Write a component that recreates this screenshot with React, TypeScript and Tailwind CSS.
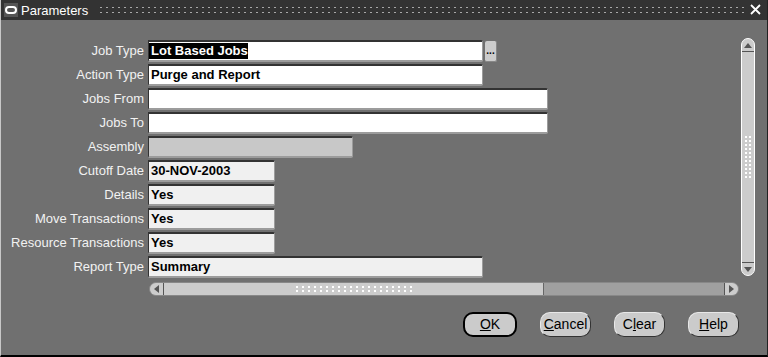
import React from "react";

type Row = {
  label: string;
  value: string;
  width: string;
  tone: "white" | "light" | "gray";
  selected?: boolean;
  lov?: boolean;
};

const rows: Row[] = [
  { label: "Job Type", value: "Lot Based Jobs", width: "w-[335px]", tone: "white", selected: true, lov: true },
  { label: "Action Type", value: "Purge and Report", width: "w-[335px]", tone: "white" },
  { label: "Jobs From", value: "", width: "w-[400px]", tone: "white" },
  { label: "Jobs To", value: "", width: "w-[400px]", tone: "white" },
  { label: "Assembly", value: "", width: "w-[205px]", tone: "gray" },
  { label: "Cutoff Date", value: "30-NOV-2003", width: "w-[127px]", tone: "light" },
  { label: "Details", value: "Yes", width: "w-[127px]", tone: "light" },
  { label: "Move Transactions", value: "Yes", width: "w-[127px]", tone: "light" },
  { label: "Resource Transactions", value: "Yes", width: "w-[127px]", tone: "light" },
  { label: "Report Type", value: "Summary", width: "w-[335px]", tone: "light" },
];

function Field({ row }: { row: Row }) {
  const bg =
    row.tone === "white" ? "bg-white" : row.tone === "light" ? "bg-[#f0f0f0]" : "bg-[#c8c8c8]";
  return (
    <div
      className={`${row.width} ${bg} h-[22px] flex items-center border-t-2 border-l border-t-[#333] border-l-[#333] border-r border-b-2 border-r-[#9c9c9c] border-b-[#9c9c9c] rounded-tr-[2px] rounded-br-[2px]`}
    >
      {row.value && (
        <span
          className={`pl-[2px] text-[13px] font-bold leading-[16px] ${
            row.selected ? "bg-black text-white" : "text-black"
          }`}
        >
          {row.value}
        </span>
      )}
    </div>
  );
}

function Btn({ pre, u, post, def }: { pre: string; u: string; post: string; def?: boolean }) {
  return (
    <div
      className={`h-[25px] flex items-center justify-center bg-[#cbcbcb] rounded-[10px] text-[14px] text-black ${
        def ? "w-[54px] border-2 border-black" : "w-[51px] border border-[#e8e8e8] border-r-[#333] border-b-[#333]"
      }`}
    >
      <span>
        {pre}
        <span className="underline">{u}</span>
        {post}
      </span>
    </div>
  );
}

export default function App() {
  return (
    <div
      className="w-[768px] h-[357px] bg-[#707070] flex flex-col overflow-hidden border-l border-l-[#c8c8c8] border-b-2 border-b-black border-r border-r-[#222]"
      style={{ fontFamily: '"Liberation Sans", Arial, sans-serif' }}
    >
      {/* title bar */}
      <div className="h-[20px] bg-[#333] flex items-center shrink-0">
        <div className="ml-[3px] w-[14px] h-[14px] bg-[#555] flex items-center justify-center">
          <div className="w-[12px] h-[8px] rounded-full border-2 border-white" />
        </div>
        <span className="ml-[3px] text-white text-[13px] leading-none">Parameters</span>
        <div className="ml-[10px] flex-1 h-[10px] bg-[radial-gradient(circle,#a8a8a8_0.9px,transparent_1.1px)] bg-[length:6px_5px]" />
        <svg width="16" height="14" viewBox="0 0 16 14" className="mx-[3px]">
          <path d="M3 2 L12 11 M12 2 L3 11" stroke="white" strokeWidth="1.8" />
        </svg>
      </div>

      {/* content */}
      <div className="flex pt-[18px]">
        <div className="flex flex-col gap-[2px] pt-[2px]">
          {rows.map((r) => (
            <div key={r.label} className="flex items-center h-[22px]">
              <div className="w-[147px] pr-[4px] text-right text-[13px] text-[#f2f2f2] whitespace-nowrap">
                {r.label}
              </div>
              <Field row={r} />
              {r.lov && (
                <div className="ml-[2px] w-[12px] h-[21px] bg-[#cccccc] rounded-[2px] border-r border-b border-[#888] flex items-center justify-center text-[10px] font-bold leading-none text-black">
                  ...
                </div>
              )}
            </div>
          ))}
        </div>
        <div className="flex-1" />
        {/* vertical scrollbar */}
        <div className="mr-[12px] w-[14px] h-[238px] bg-[#cccccc] border border-white rounded-t-[7px] rounded-b-[7px] flex flex-col items-center">
          <div className="h-[13px] w-full flex items-center justify-center border-b border-[#555]">
            <svg width="8" height="5"><path d="M0 5 L4 0 L8 5Z" fill="#555" /></svg>
          </div>
          <div className="flex-1 w-full flex items-center justify-center">
            <div className="w-[8px] h-[44px] bg-[radial-gradient(circle,#fff_0.8px,transparent_1px)] bg-[length:4px_4px]" />
          </div>
          <div className="h-[13px] w-full flex items-center justify-center border-t border-[#555]">
            <svg width="8" height="5"><path d="M0 0 L4 5 L8 0Z" fill="#555" /></svg>
          </div>
        </div>
      </div>

      {/* horizontal scrollbar */}
      <div className="ml-[148px] mt-[4px] w-[590px] h-[14px] flex bg-[#a0a0a0] rounded-l-[7px] rounded-r-[7px] border border-[#888]">
        <div className="w-[14px] h-full flex items-center justify-center bg-[#cccccc] rounded-l-[7px] border-r border-[#555]">
          <svg width="5" height="8"><path d="M5 0 L0 4 L5 8Z" fill="#555" /></svg>
        </div>
        <div className="w-[380px] h-full bg-[#cccccc] flex items-center justify-center border-r border-[#666]">
          <div className="w-[120px] h-[8px] bg-[radial-gradient(circle,#fff_0.8px,transparent_1px)] bg-[length:6px_4px]" />
        </div>
        <div className="flex-1" />
        <div className="w-[14px] h-full flex items-center justify-center bg-[#cccccc] rounded-r-[7px] border-l border-[#555]">
          <svg width="5" height="8"><path d="M0 0 L5 4 L0 8Z" fill="#555" /></svg>
        </div>
      </div>

      {/* buttons */}
      <div className="flex justify-end gap-[23px] pr-[28px] mt-[16px]">
        <Btn pre="" u="O" post="K" def />
        <Btn pre="" u="C" post="ancel" />
        <Btn pre="C" u="l" post="ear" />
        <Btn pre="" u="H" post="elp" />
      </div>
    </div>
  );
}
